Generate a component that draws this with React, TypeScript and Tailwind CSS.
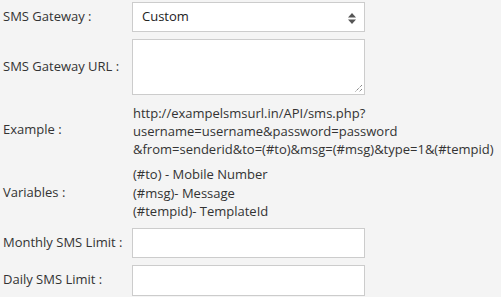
import React from "react";

const font = { fontFamily: '"Open Sans", "Noto Sans", sans-serif' };

function Label({ children }: { children: React.ReactNode }) {
  return <div className="flex items-center pl-[3px] text-[13px] text-[#333]">{children}</div>;
}

export default function App() {
  return (
    <div className="w-[501px] h-[297px] bg-[#f4f4f4] text-[#333] text-[13px] overflow-hidden" style={font}>
      <div className="grid grid-cols-[132px_233px] gap-y-[7px] pt-[2px]">
        <Label>SMS Gateway :</Label>
        <div className="relative h-[30px] border border-[#ccc] bg-white flex items-center pl-[9px]">
          <span className="text-[13px] text-[#222]">Custom</span>
          <svg className="absolute right-[8px] top-[10px]" width="8" height="11" viewBox="0 0 8 11">
            <path d="M4 0 L8 4.5 L0 4.5 Z" fill="#555" />
            <path d="M0 6.5 L8 6.5 L4 11 Z" fill="#555" />
          </svg>
        </div>

        <Label>SMS Gateway URL :</Label>
        <div className="relative h-[56px] border border-[#ccc] bg-white">
          <svg className="absolute right-[1px] bottom-[1px]" width="9" height="9" viewBox="0 0 9 9">
            <path d="M8 1 L1 8 M8 5 L5 8" stroke="#555" strokeWidth="1" strokeDasharray="1 1" />
          </svg>
        </div>

        <Label>Example :</Label>
        <div className="pl-[1px] pt-[2px] leading-[18px] whitespace-nowrap">
          <div>http://exampelsmsurl.in/API/sms.php?</div>
          <div>username=username&amp;password=password</div>
          <div>&amp;from=senderid&amp;to=(#to)&amp;msg=(#msg)&amp;type=1&amp;(#tempid)</div>
        </div>

        <Label>Variables :</Label>
        <div className="pl-[1px] leading-[18.5px] whitespace-nowrap">
          <div>(#to) - Mobile Number</div>
          <div>(#msg)- Message</div>
          <div>(#tempid)- TemplateId</div>
        </div>

        <Label>Monthly SMS Limit :</Label>
        <div className="h-[30px] border border-[#ccc] bg-white" />

        <Label>Daily SMS Limit :</Label>
        <div className="h-[31px] border border-[#ccc] bg-white" />
      </div>
    </div>
  );
}
